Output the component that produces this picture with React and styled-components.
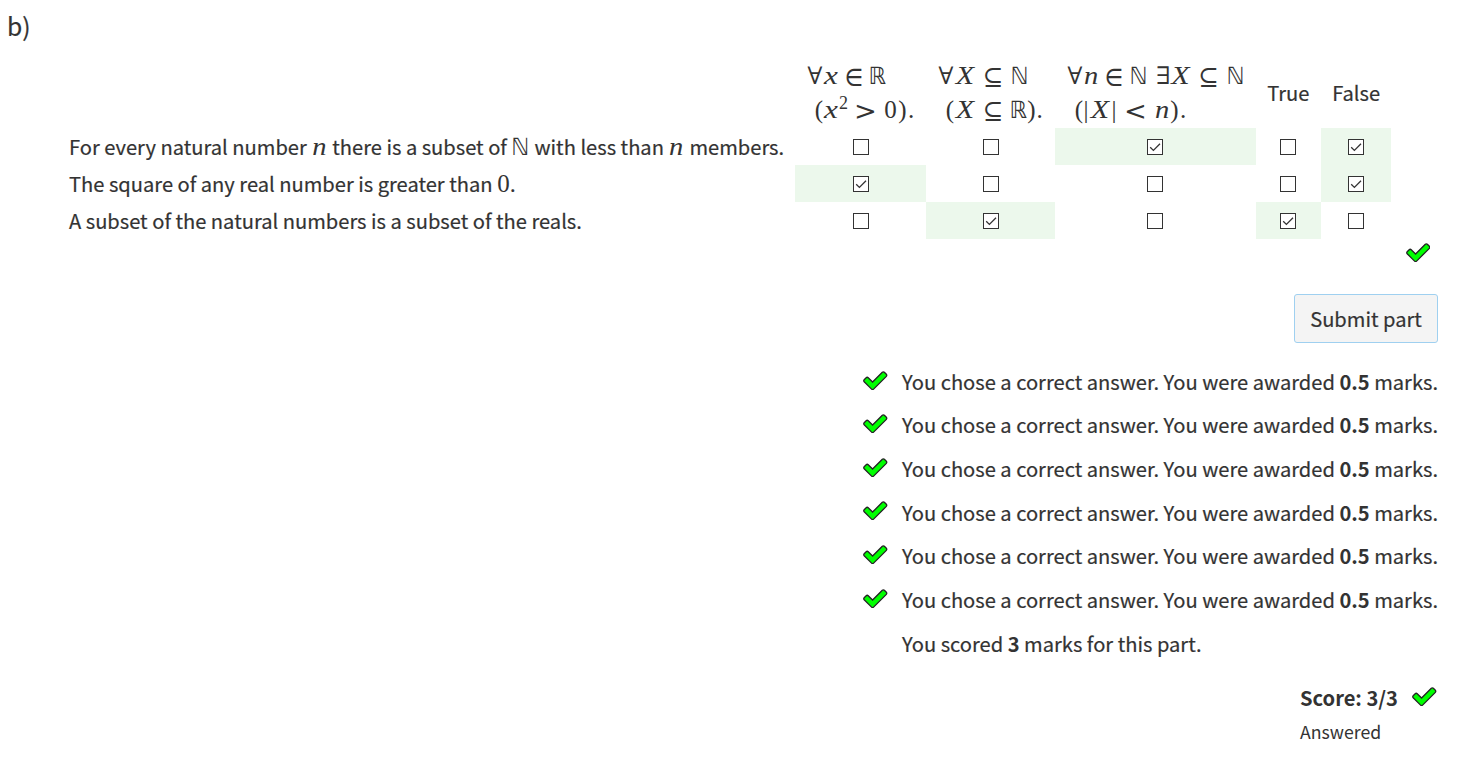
import React from "react";
import styled, { createGlobalStyle } from "styled-components";

const GlobalStyle = createGlobalStyle`
  body {
    margin: 0;
    background: #fff;
    color: #333;
    font-family: "Noto Sans CJK SC", "Open Sans", sans-serif;
    font-size: 20.13px;
    line-height: 32px;
    -webkit-text-stroke: 0.2px #333;
  }
  * { box-sizing: border-box; }
`;

const Page = styled.main`
  width: 1465px;
  height: 765px;
  overflow: hidden;
  display: flex;
  flex-direction: column;
`;

const PartHeading = styled.h3`
  margin: 0;
  padding: 9px 0 0 7px;
  height: 54px;
  font-size: 24.7px;
  font-weight: 400;
`;

const Matrix = styled.div`
  display: grid;
  grid-template-columns: 726px 131px 129px 200.8px 65px 70.2px;
  grid-template-rows: 74px repeat(3, 37px);
  margin-left: 69px;
`;

const ColumnHead = styled.div`
  display: flex;
  flex-direction: column;
  justify-content: center;
  padding-left: ${(p) => (p.$plain ? "11.4px" : "12px")};
  padding-top: ${(p) => (p.$plain ? "4px" : "3px")};
`;

const RowLabel = styled.div`
  display: flex;
  align-items: center;
  white-space: pre;
`;

const Cell = styled.div`
  display: flex;
  align-items: center;
  justify-content: center;
  padding-top: 1px;
  background: ${(p) => (p.$correct ? "#ecf8ec" : "transparent")};
`;

const Box = styled.span`
  display: flex;
  width: 16px;
  height: 16px;
  border: 1px solid #333;
  background: #fff;
`;

const faces = {
  it: `font-family: "Liberation Serif", serif; font-style: italic; font-size: 25px; -webkit-text-stroke: 0;`,
  rm: `font-family: "Liberation Serif", serif; font-size: 25px; -webkit-text-stroke: 0;`,
  sym: `font-family: "DejaVu Math TeX Gyre", "DejaVu Sans", sans-serif; font-size: 24px; -webkit-text-stroke: 0;`,
  bb: `font-family: "DejaVu Sans", sans-serif; font-size: 24px; -webkit-text-stroke: 0;`,
  sup: `font-family: "Liberation Serif", serif; font-size: 18px; -webkit-text-stroke: 0;`,
};

const Glyph = styled.span`
  display: inline-flex;
  justify-content: center;
  width: ${(p) => p.$w}px;
  line-height: 24px;
  ${(p) => faces[p.$face]}
  transform: ${(p) => `translateY(${p.$face === "sup" ? -9 : 0}px) scale(${p.$stretch || 1}, ${p.$rise || 1})`};
`;

const MathLine = styled.div`
  display: flex;
  align-items: baseline;
  height: 34px;
  padding-top: 5px;
  padding-left: ${(p) => p.$indent || 0}px;
`;

const Feedback = styled.div`
  display: flex;
  justify-content: flex-end;
  padding: 3px 35px 0 0;
  height: 55px;
`;

const SubmitButton = styled.button`
  align-self: flex-end;
  margin-right: 27px;
  width: 144px;
  height: 49px;
  padding: 1px 0 0;
  border: 1px solid #9fd0f0;
  border-radius: 3px;
  background: #f4f4f4;
  color: #333;
  font: inherit;
`;

const Messages = styled.ul`
  list-style: none;
  align-self: flex-end;
  width: 575px;
  margin: 21px 27px 0 0;
  padding: 0;
`;

const Message = styled.li`
  display: flex;
  height: 43.64px;
  padding-top: 1.8px;
  white-space: pre;
`;

const MessageIcon = styled.span`
  width: 39px;
  padding-top: 3.8px;
`;

const Score = styled.div`
  display: flex;
  justify-content: space-between;
  align-self: flex-end;
  width: 136.6px;
  margin: 13px 28.4px 0 0;
  height: 33px;
  font-weight: 700;
  -webkit-text-stroke: 0;

  svg { margin-top: 4px; }
`;

const Status = styled.div`
  align-self: flex-end;
  width: 138px;
  margin-right: 27px;
  font-size: 17.7px;
  -webkit-text-stroke: 0;
`;

const Strong = styled.b`
  -webkit-text-stroke: 0;
`;

const Check = styled.svg`
  display: block;
  width: 24.5px;
  height: 20px;
`;

const Tick = () => (
  <Check viewBox="70 220 1650 1320">
    <path
      fill="#00ff00"
      stroke="#222"
      strokeWidth="88"
      d="M1671 566q0 40-28 68l-724 724-136 136q-28 28-68 28t-68-28l-136-136-362-362q-28-28-28-68t28-68l136-136q28-28 68-28t68 28l294 295 656-657q28-28 68-28t68 28l136 136q28 28 28 68z"
    />
  </Check>
);

const Checkbox = ({ checked }) => (
  <Box role="checkbox" aria-checked={checked}>
    {checked && (
      <svg width="14" height="14" viewBox="0 0 14 14">
        <path d="M2.2 7.2L5.4 10.4L12 3.8" fill="none" stroke="#333" strokeWidth="1.3" />
      </svg>
    )}
  </Box>
);

const Formula = ({ tokens, indent }) => (
  <MathLine $indent={indent}>
    {tokens.map(([text, w, face, stretch, rise], i) => (
      <Glyph key={i} $w={w} $face={face} $stretch={stretch} $rise={rise}>{text}</Glyph>
    ))}
  </MathLine>
);

const forall = ["∀", 16, "sym", 0.94];
const smallX = ["x", 16, "it", 1.25];
const bigX = ["X", 22, "it", 1.2];
const smallN = ["n", 16, "it", 1.14];
const subset = ["⊆", 34, "sym"];
const member = ["∈", 30, "sym", 0.95, 1.15];
const reals = ["ℝ", 17, "bb", 0.92];
const naturals = ["ℕ", 17, "bb", 0.92];

const heads = [
  [
    [forall, smallX, member, reals],
    [["(", 8, "rm"], smallX, ["2", 9, "sup"], [">", 35, "sym", 1.12, 1.12], ["0", 15, "rm"], [")", 9, "rm"], [".", 8, "rm"]],
  ],
  [
    [forall, bigX, subset, ["ℕ", 19, "bb", 0.92]],
    [["(", 8, "rm"], bigX, subset, reals, [")", 9, "rm"], [".", 7, "rm"]],
  ],
  [
    [forall, smallN, member, ["ℕ", 19, "bb", 0.92], [" ", 8, "rm"], ["∃", 14, "sym", 0.92], ["X", 21, "it", 1.2], ["⊆", 35, "sym"], ["ℕ", 19, "bb", 0.92]],
    [["(", 8, "rm"], ["|", 6, "rm"], bigX, ["|", 6, "rm"], ["<", 37, "sym", 1.12, 1.12], smallN, [")", 9, "rm"], [".", 8, "rm"]],
  ],
];

const Token = ({ of: [text, , face, stretch], w }) => (
  <Glyph $w={w} $face={face} $stretch={stretch}>{text}</Glyph>
);

const rows = [
  {
    label: (
      <>
        For every natural number <Token of={smallN} w={16.5} /> there is a subset of{" "}
        <Token of={naturals} w={18.5} /> with less than <Token of={smallN} w={16.5} /> members.
      </>
    ),
    checks: [0, 0, 1, 0, 1],
  },
  {
    label: (
      <>
        The square of any real number is greater than <Glyph $w={13} $face="rm">0</Glyph>.
      </>
    ),
    checks: [1, 0, 0, 0, 1],
  },
  { label: "A subset of the natural numbers is a subset of the reals.", checks: [0, 1, 0, 1, 0] },
];

export default function App() {
  return (
    <Page>
      <GlobalStyle />
      <PartHeading>b)</PartHeading>
      <Matrix>
        <div />
        {heads.map(([first, second], i) => (
          <ColumnHead key={i}>
            <Formula tokens={first} />
            <Formula tokens={second} indent={8} />
          </ColumnHead>
        ))}
        <ColumnHead $plain>True</ColumnHead>
        <ColumnHead $plain>False</ColumnHead>
        {rows.map((row, r) => (
          <React.Fragment key={r}>
            <RowLabel>
              <span>{row.label}</span>
            </RowLabel>
            {row.checks.map((c, i) => (
              <Cell key={i} $correct={!!c}>
                <Checkbox checked={!!c} />
              </Cell>
            ))}
          </React.Fragment>
        ))}
      </Matrix>
      <Feedback>
        <Tick />
      </Feedback>
      <SubmitButton type="button">Submit part</SubmitButton>
      <Messages>
        {[0, 1, 2, 3, 4, 5].map((i) => (
          <Message key={i}>
            <MessageIcon>
              <Tick />
            </MessageIcon>
            <span>
              You chose a correct answer. You were awarded <Strong>0.5</Strong> marks.
            </span>
          </Message>
        ))}
        <Message>
          <MessageIcon />
          <span>
            You scored <Strong>3</Strong> marks for this part.
          </span>
        </Message>
      </Messages>
      <Score>
        <span>Score: 3/3</span>
        <Tick />
      </Score>
      <Status>Answered</Status>
    </Page>
  );
}
